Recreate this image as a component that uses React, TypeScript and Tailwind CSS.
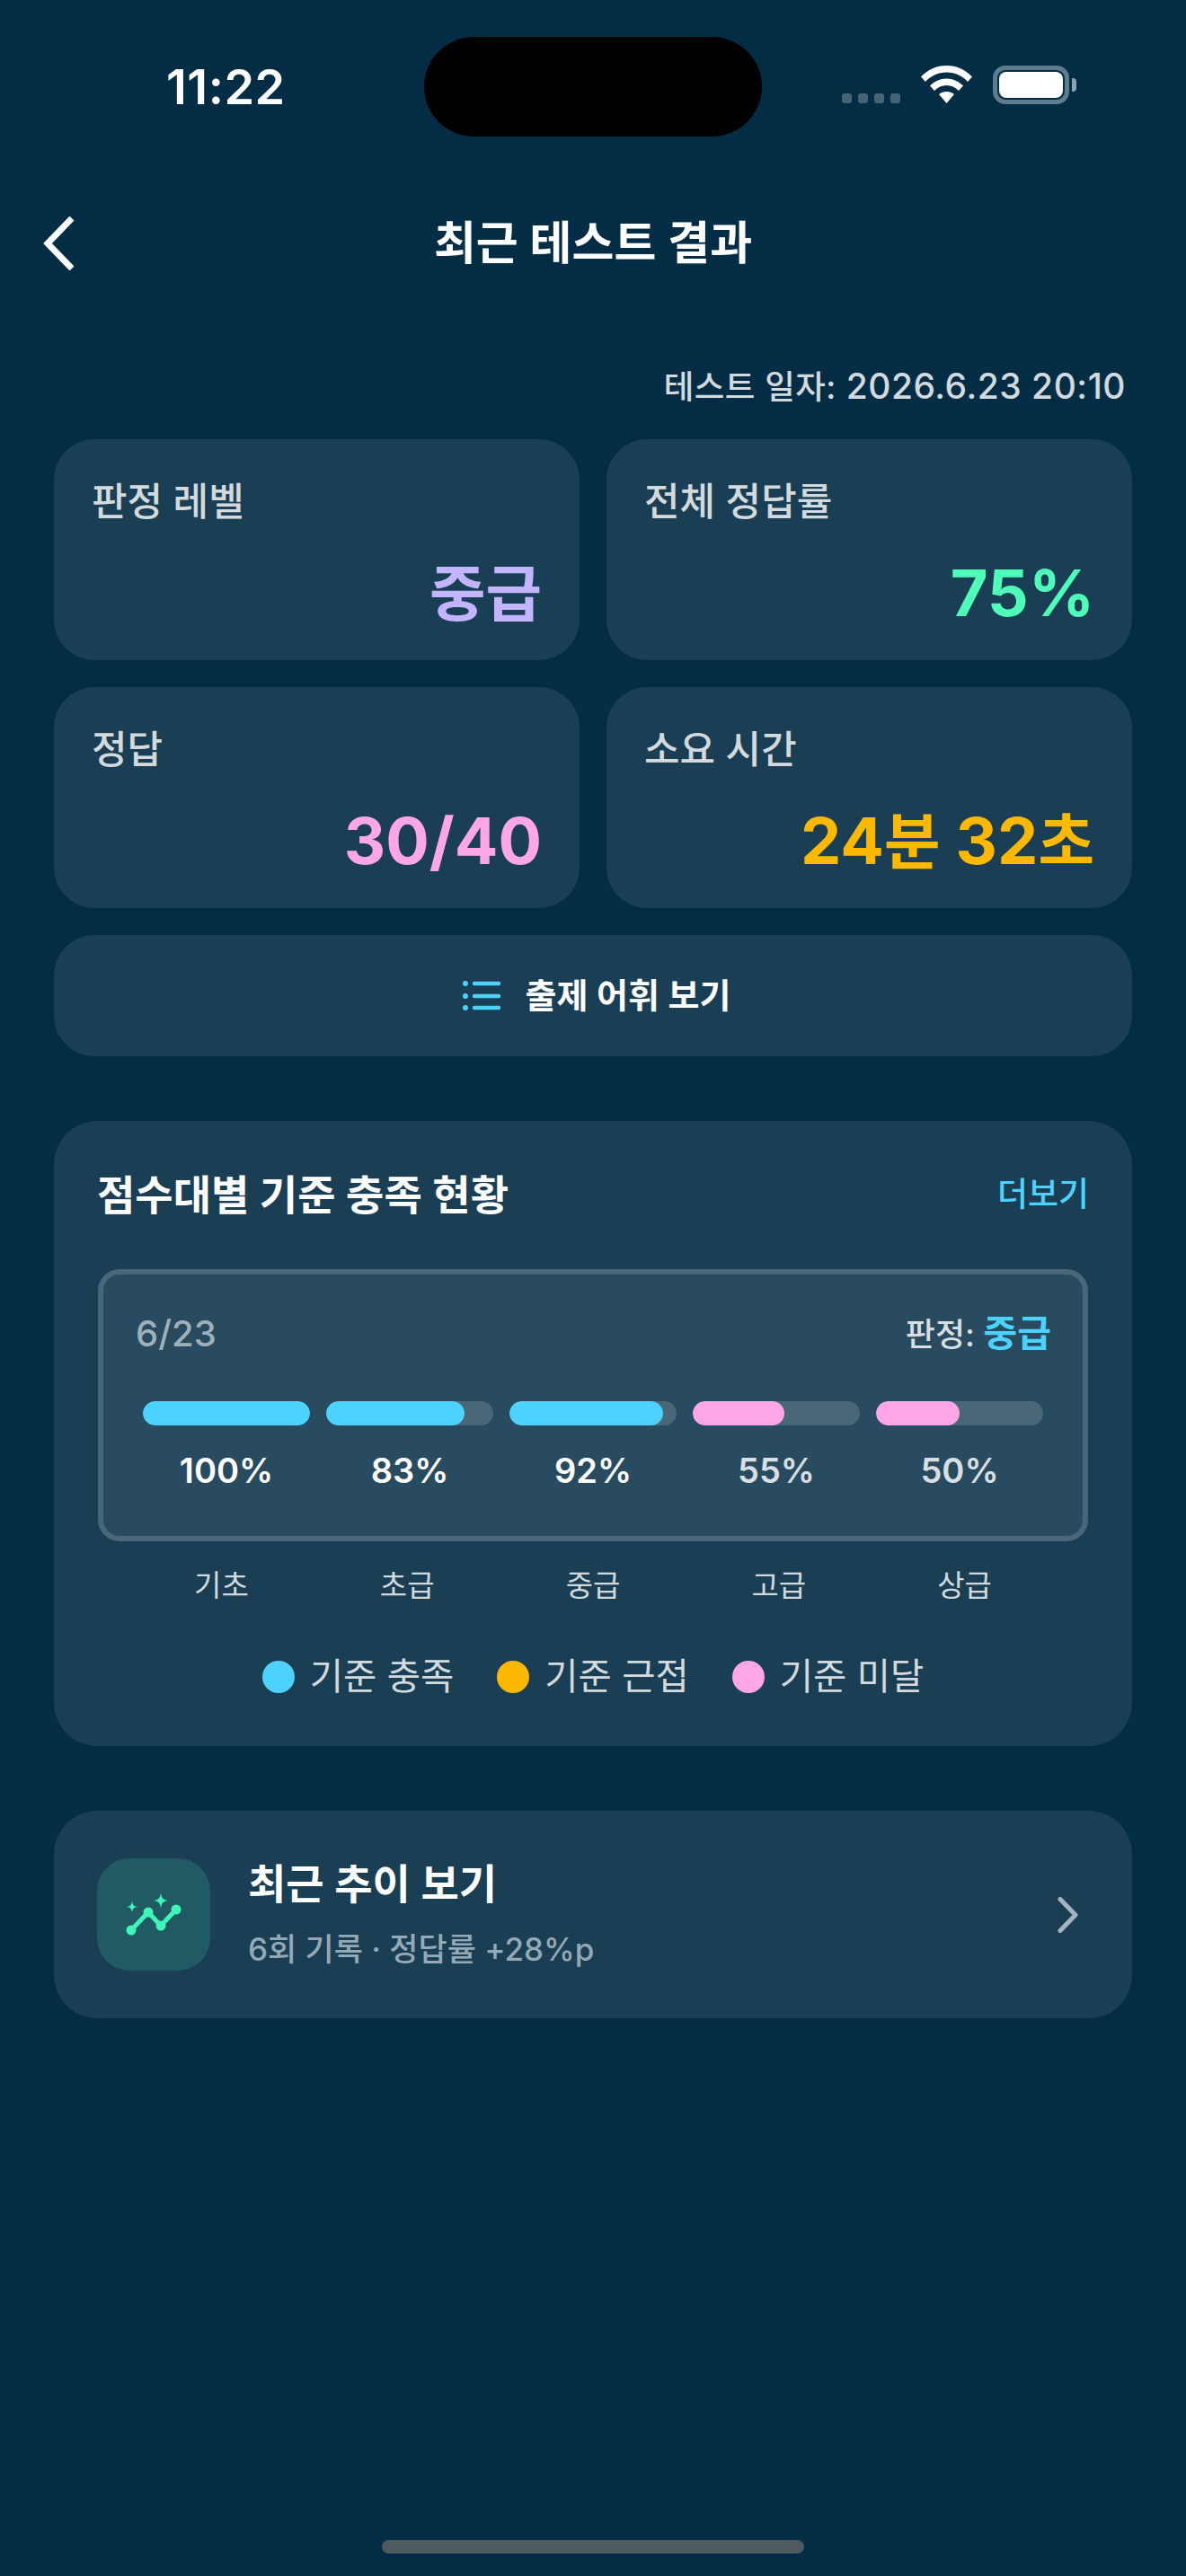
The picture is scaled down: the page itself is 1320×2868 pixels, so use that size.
import type { ReactNode } from 'react';

const font = "font-['Inter','Noto_Sans_CJK_KR',sans-serif]";

// Hangul runs a little smaller than the digits next to it
const Ko = ({ children }: { children: ReactNode }) => <span className="text-[68px]">{children}</span>;

const summary = [
  { label: '판정 레벨', value: <Ko>중급</Ko>, color: 'text-[#c3b5fd]' },
  { label: '전체 정답률', value: '75%', color: 'text-[#4dffb8]' },
  { label: '정답', value: '30/40', color: 'text-[#ffa6e6]' },
  {
    label: '소요 시간',
    value: (
      <>
        24<Ko>분</Ko> 32<Ko>초</Ko>
      </>
    ),
    color: 'text-[#ffb800]',
  },
];

const bars = [
  { pct: 100, text: 'text-white', fill: 'bg-[#4dd2ff]' },
  { pct: 83, text: 'text-white', fill: 'bg-[#4dd2ff]' },
  { pct: 92, text: 'text-white', fill: 'bg-[#4dd2ff]' },
  { pct: 55, text: 'text-[#d8dee2]', fill: 'bg-[#ffa6e6]' },
  { pct: 50, text: 'text-[#d8dee2]', fill: 'bg-[#ffa6e6]' },
];

const levels = ['기초', '초급', '중급', '고급', '상급'];

const legend = [
  { label: '기준 충족', color: 'bg-[#4dd2ff]' },
  { label: '기준 근접', color: 'bg-[#ffb800]' },
  { label: '기준 미달', color: 'bg-[#ffa6e6]' },
];

const StatusBar = () => (
  <div className="flex h-[111px] mt-[41px] w-full">
    <div className="w-[472px] flex items-center pl-[185px]">
      <span className="text-[54px] leading-none font-semibold text-white tracking-[0.5px]">11:22</span>
    </div>
    <div className="w-[376px] h-[111px] rounded-full bg-black" />
    <div className="flex items-start pt-[32px] pl-[89px]">
      <div className="flex gap-[7px] mt-[31px]">
        {[0, 1, 2, 3].map((i) => (
          <div key={i} className="w-[11px] h-[11px] rounded-[3px] bg-[#456577]" />
        ))}
      </div>
      <svg className="ml-[23px]" width="57" height="42" viewBox="0 0 57 42" fill="#fff">
        <path d="M0 12.5C7.5 4.5 17.5 0 28.5 0S49.500 4.500 57 12.500L52 18C45.800 11.300 37.500 7.500 28.500 7.500S11.200 11.300 5 18Z" />
        <path d="M10 22.500C15 17.500 21.500 14.500 28.500 14.500S42 17.500 47 22.500L42 28C38.300 24.300 33.600 22 28.500 22S18.700 24.300 15 28Z" />
        <path d="M20 32C22.300 30 25.300 29 28.500 29S34.700 30 37 32L28.500 42Z" />
      </svg>
      <div className="ml-[23px] w-[85px] h-[43px] rounded-[14px] border-[5px] border-[#5f7c8e] p-[2px]">
        <div className="w-full h-full rounded-[8px] bg-white" />
      </div>
      <div className="ml-[3px] mt-[14px] w-[5px] h-[15px] rounded-r-[4px] bg-[#8ea1ad]" />
    </div>
  </div>
);

const SummaryCard = ({ label, value, color }: (typeof summary)[number]) => (
  <div className="h-[246px] rounded-[45px] bg-[#1a3e53] pl-[42px] pr-[42px] pt-[42px] flex flex-col">
    <div className="text-[43px] leading-[54px] font-medium text-[#d3dade]">{label}</div>
    <div className={`mt-[33px] text-right text-[72px] leading-[84px] font-bold ${color}`}>{value}</div>
  </div>
);

const ListIcon = () => (
  <svg width="42" height="34" viewBox="0 0 42 34" stroke="#4dd2ff" strokeWidth="4.500" strokeLinecap="round" fill="#4dd2ff">
    <circle cx="3" cy="3" r="3" stroke="none" />
    <circle cx="3" cy="17" r="3" stroke="none" />
    <circle cx="3" cy="30" r="3" stroke="none" />
    <path d="M13 3H40M13 17H40M13 30H40" fill="none" />
  </svg>
);

const TrendIcon = () => (
  <svg width="126" height="125" viewBox="0 0 126 125" fill="#3ff5b7">
    <path d="M38 80L57 60L71 75L88 57" fill="none" stroke="#3ff5b7" strokeWidth="5" strokeLinejoin="round" />
    <circle cx="38" cy="80" r="5.500" />
    <circle cx="57" cy="60" r="5.500" />
    <circle cx="71" cy="75" r="5.500" />
    <circle cx="88" cy="57" r="5.500" />
    <path d="M39 47.500C39.500 52 41 53.500 45.500 54C41 54.500 39.500 56 39 60.500C38.500 56 37 54.500 32.500 54C37 53.500 38.500 52 39 47.500Z" />
    <path d="M71 38.500C71.800 44.500 73.500 46.200 79.500 47C73.500 47.800 71.800 49.500 71 55.500C70.200 49.500 68.500 47.800 62.500 47C68.500 46.200 70.200 44.500 71 38.500Z" />
  </svg>
);

export default function App() {
  return (
    <div className={`w-[1320px] min-h-[2868px] bg-[#032d45] flex flex-col ${font}`}>
      <StatusBar />

      <div className="mt-[89px] h-[58px] grid grid-cols-[1fr_auto_1fr] items-center">
        <svg className="ml-[47px]" width="38" height="60" viewBox="0 0 38 60" fill="none" stroke="#fff" strokeWidth="7" strokeLinejoin="miter">
          <path d="M33 2L6 30L33 58" />
        </svg>
        <div className="text-[51px] leading-[58px] font-semibold text-white">최근 테스트 결과</div>
        <div />
      </div>

      <div className="mt-[107px] h-[48px] pr-[67px] text-right text-[39px] leading-[48px] font-medium tracking-[0.5px] text-[#d3dade]">
        <span className="text-[36.500px]">테스트 일자:</span> 2026.6.23 20:10
      </div>

      <div className="mt-[35px] px-[60px]">
        <div className="grid grid-cols-2 gap-[30px]">
          {summary.map((item) => (
            <SummaryCard key={item.label} {...item} />
          ))}
        </div>

        <div className="mt-[30px] h-[135px] rounded-[45px] bg-[#1a3e53] pl-[8px] flex items-center justify-center gap-[28px]">
          <ListIcon />
          <span className="text-[38px] font-semibold text-white">출제 어휘 보기</span>
        </div>

        <div className="mt-[72px] h-[696px] rounded-[48px] bg-[#1a3e53] px-[48px] pt-[52px]">
          <div className="flex items-center justify-between h-[60px]">
            <span className="text-[46px] font-semibold text-white">점수대별 기준 충족 현황</span>
            <span className="text-[37px] font-medium text-[#4dd2ff]">더보기</span>
          </div>

          <div className="mt-[53px] mx-[1px] h-[303px] rounded-[24px] border-[6px] border-[#4a6778] bg-[#284b5f] pl-[36px] pr-[35px] pt-[36px]">
            <div className="flex items-center justify-between h-[60px]">
              <span className="text-[40px] font-medium text-[#9fb0bb]">6/23</span>
              <span className="text-[36px] font-medium text-[#d8dee2]">
                판정: <span className="text-[41px] font-bold text-[#4dd2ff]">중급</span>
              </span>
            </div>
            <div className="mt-[45px] ml-[8px] mr-[9px] grid grid-cols-5 gap-[18px]">
              {bars.map((bar) => (
                <div key={bar.pct} className="flex flex-col items-center">
                  <div className="w-full h-[27px] rounded-full bg-[#4a6778] overflow-hidden">
                    <div className={`h-full rounded-full ${bar.fill}`} style={{ width: `${bar.pct}%` }} />
                  </div>
                  <span className={`mt-[26px] text-[38px] leading-[48px] font-semibold ${bar.text}`}>{bar.pct}%</span>
                </div>
              ))}
            </div>
          </div>

          <div className="mt-[28px] mx-[35px] grid grid-cols-5">
            {levels.map((level) => (
              <span key={level} className="text-center text-[33px] leading-[42px] text-[#d3dade]">{level}</span>
            ))}
          </div>

          <div className="mt-[54px] flex items-center justify-center gap-[48px]">
            {legend.map((item) => (
              <div key={item.label} className="flex items-center gap-[17px]">
                <div className={`w-[36px] h-[36px] rounded-full ${item.color}`} />
                <span className="text-[40.500px] leading-[54px] text-[#d3dade]">{item.label}</span>
              </div>
            ))}
          </div>
        </div>

        <div className="mt-[72px] h-[231px] rounded-[48px] bg-[#1a3e53] pl-[48px] pr-[60px] flex items-center">
          <div className="w-[126px] h-[125px] rounded-[36px] bg-[#205a63] shrink-0">
            <TrendIcon />
          </div>
          <div className="ml-[42px] flex-1">
            <div className="-mt-[2px] text-[46px] leading-[60px] font-semibold text-white">최근 추이 보기</div>
            <div className="mt-[19px] text-[35px] leading-[48px] font-medium text-[#94a8b5]">6회 기록 · 정답률 +28%p</div>
          </div>
          <svg width="24" height="40" viewBox="0 0 24 40" fill="none" stroke="#a5b5bf" strokeWidth="5" strokeLinecap="round" strokeLinejoin="round">
            <path d="M4 2.500L21 20L4 37.500" />
          </svg>
        </div>
      </div>

      <div className="mt-auto mb-[25px] mx-auto w-[470px] h-[15px] rounded-full bg-[#4f5a60]" />
    </div>
  );
}
